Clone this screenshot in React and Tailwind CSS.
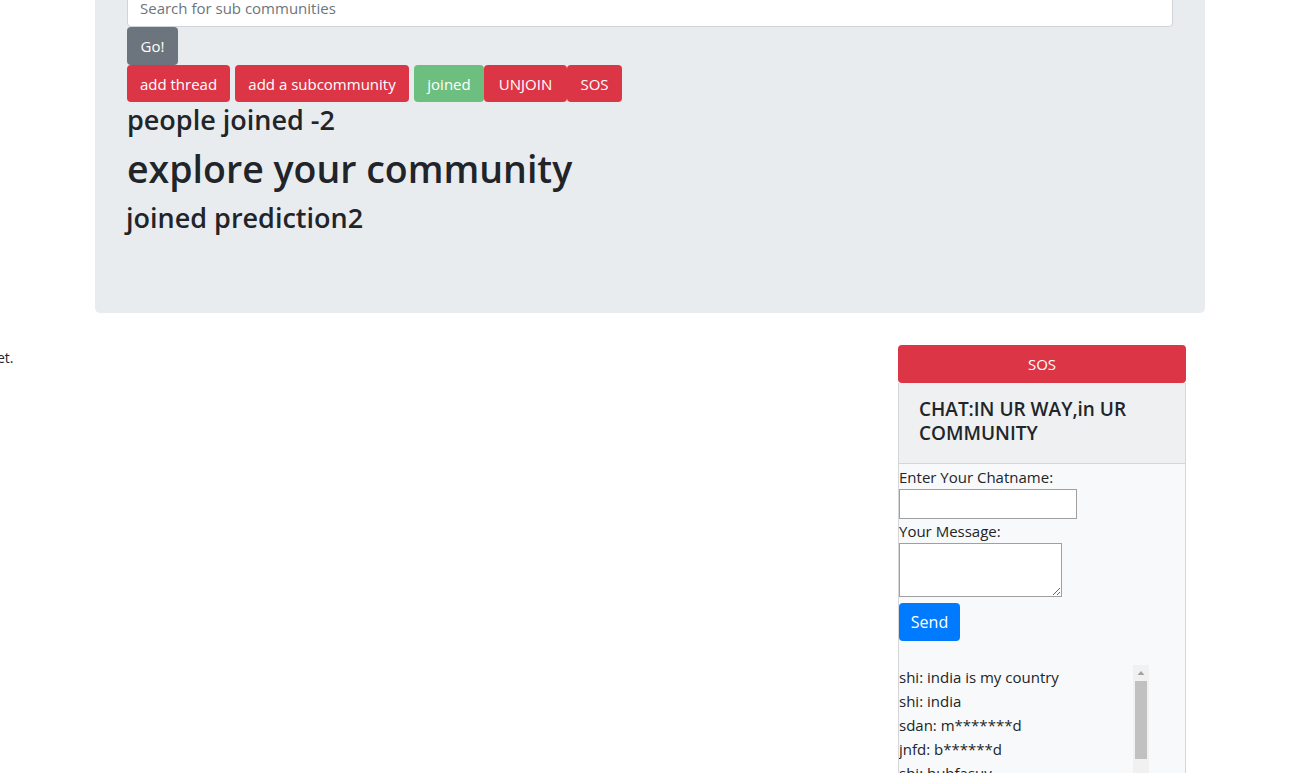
import React, { useState } from "react";

const messages = [
    "shi: india is my country",
    "shi: india",
    "sdan: m*******d",
    "jnfd: b******d",
    "shi: hubfasuy",
    "shi: hello",
    "sdan: hi all",
    "jnfd: good morning",
];

const App = () => {
    const [search, setSearch] = useState("");
    const [chatname, setChatname] = useState("");
    const [message, setMessage] = useState("");

    return (
        <div className="min-h-screen bg-white font-['Open_Sans',sans-serif] text-[15px] leading-6 text-[#212529] overflow-hidden">
            <div className="-mt-[11px] ml-[95px] w-[1110px] rounded-b-[5px] bg-[#e9ecef] px-8 pb-[78px]">
                <input
                    type="text"
                    value={search}
                    onChange={(e) => setSearch(e.target.value)}
                    placeholder="Search for sub communities"
                    className="block h-[38px] w-full rounded border border-[#ced4da] bg-white px-3 text-[15px] text-[#495057] placeholder:text-[#6c757d] outline-none"
                />
                <button className="block h-[38px] w-[51px] rounded bg-[#6c757d] text-white">Go!</button>
                <div className="flex">
                    <button className="h-[37px] w-[103px] rounded bg-[#dc3545] text-white">add thread</button>
                    <button className="ml-[5px] h-[37px] w-[174px] rounded bg-[#dc3545] text-white">add a subcommunity</button>
                    <button className="ml-[5px] h-[37px] w-[70px] rounded bg-[#6cbf7f] text-white">joined</button>
                    <button className="h-[37px] w-[83px] rounded bg-[#dc3545] text-white">UNJOIN</button>
                    <button className="h-[37px] w-[55px] rounded bg-[#dc3545] text-white">SOS</button>
                </div>
                <h3 className="mt-px mb-2 text-[27px] font-semibold leading-[34px]">people joined -2</h3>
                <h1 className="mb-2 text-[37.5px] font-semibold leading-[48px]">explore your community</h1>
                <h3 className="-ml-px text-[27px] font-semibold leading-[34px]">joined prediction2</h3>
            </div>

            <div className="mt-[32px] flex">
                <div className="flex-1">
                    <p className="-ml-[3px] mt-[3px] text-[14px] leading-5">et.</p>
                </div>
                <div className="mr-[105px] w-[288px]">
                    <button className="block h-[38px] w-full rounded bg-[#dc3545] text-white">SOS</button>
                    <div className="border-x border-[#d6d6d6] bg-[#f8f9fa]">
                        <div className="border-b border-[#d6d6d6] bg-[#eff0f2] px-5 pt-[14px] pb-[18px]">
                            <h4 className="text-[19px] font-semibold leading-6">CHAT:IN UR WAY,in UR COMMUNITY</h4>
                        </div>
                        <div className="pt-px pb-10">
                            <label className="block">Enter Your Chatname:</label>
                            <input
                                type="text"
                                value={chatname}
                                onChange={(e) => setChatname(e.target.value)}
                                className="block h-[30px] w-[178px] border border-[#a0a0a0] bg-white outline-none"
                            />
                            <label className="block">Your Message:</label>
                            <textarea
                                value={message}
                                onChange={(e) => setMessage(e.target.value)}
                                className="block h-[54px] w-[163px] border border-[#a0a0a0] bg-white outline-none"
                            />
                            <button className="mt-[6px] block h-[38px] w-[61px] rounded bg-[#007bff] text-[16px] text-white">Send</button>
                            <div className="mt-[24px] flex h-[200px] w-[250px] overflow-hidden">
                                <div className="flex-1">
                                    {messages.map((m, i) => (
                                        <p key={i}>{m}</p>
                                    ))}
                                </div>
                                <div className="flex w-[16px] flex-col items-center bg-[#f1f1f1]">
                                    <svg width="16" height="16" viewBox="0 0 16 16">
                                        <path d="M4.5 10 L8 6 L11.5 10 Z" fill="#a3a3a3" />
                                    </svg>
                                    <div className="h-[78px] w-[12px] bg-[#c1c1c1]" />
                                </div>
                            </div>
                        </div>
                    </div>
                </div>
            </div>
        </div>
    );
};

export default App;
